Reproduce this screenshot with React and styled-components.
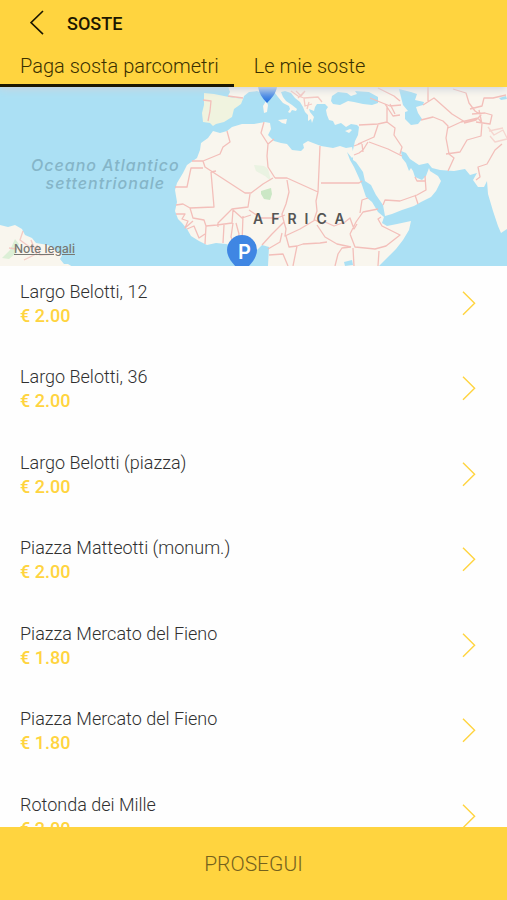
import React, { useState } from "react";
import styled, { createGlobalStyle } from "styled-components";

const tabs = ["Paga sosta parcometri", "Le mie soste"];

const stops = [
  { id: 1, name: "Largo Belotti, 12", price: "€ 2.00" },
  { id: 2, name: "Largo Belotti, 36", price: "€ 2.00" },
  { id: 3, name: "Largo Belotti (piazza)", price: "€ 2.00" },
  { id: 4, name: "Piazza Matteotti (monum.)", price: "€ 2.00" },
  { id: 5, name: "Piazza Mercato del Fieno", price: "€ 1.80" },
  { id: 6, name: "Piazza Mercato del Fieno", price: "€ 1.80" },
  { id: 7, name: "Rotonda dei Mille", price: "€ 2.00" },
];

export default function App() {
  const [tab, setTab] = useState(0);

  return (
    <Page>
      <GlobalStyle />
      <Header>
        <TitleBar>
          <BackButton type="button" aria-label="Indietro">
            <Chevron left />
          </BackButton>
          <h1>SOSTE</h1>
        </TitleBar>
        <Tabs role="tablist">
          {tabs.map((label, i) => (
            <Tab
              key={label}
              type="button"
              role="tab"
              aria-selected={tab === i}
              $active={tab === i}
              onClick={() => setTab(i)}
            >
              {label}
            </Tab>
          ))}
        </Tabs>
      </Header>

      <Map>
        <WorldMap />
        <OceanLabel>
          Oceano Atlantico
          <br />
          settentrionale
        </OceanLabel>
        <ContinentLabel>AFRICA</ContinentLabel>
        <LegalLink href="#note-legali">Note legali</LegalLink>
        <PinLetter>P</PinLetter>
      </Map>

      <List>
        {stops.map((stop) => (
          <li key={stop.id}>
            <Row type="button">
              <span>
                <Name>{stop.name}</Name>
                <Price>{stop.price}</Price>
              </span>
              <Chevron />
            </Row>
          </li>
        ))}
      </List>

      <Proceed type="button">PROSEGUI</Proceed>
    </Page>
  );
}

function Chevron({ left }) {
  return (
    <svg width="14" height="26" viewBox="0 0 14 26" fill="none" aria-hidden="true">
      <path
        d={left ? "M13 1 1 12.6 13 24.2" : "M1 0.8 12.6 12.3 1 23.8"}
        stroke="currentColor"
        strokeWidth={left ? 1.6 : 1.4}
      />
    </svg>
  );
}

function WorldMap() {
  return (
    <svg viewBox="0 87 507 179" preserveAspectRatio="xMidYMid slice" aria-hidden="true">
      <defs>
        <linearGradient id="pin" x1="0" y1="0" x2="0" y2="1">
          <stop offset="0" stopColor="#8db6ec" />
          <stop offset="1" stopColor="#1f6ee0" />
        </linearGradient>
      </defs>
      <rect y="87" width="507" height="179" fill="#abe0f4" />

      <g fill="#f9f6ee">
        {/* Europe and Asia */}
        <path d="M228 86 L230 92 228 96 236 98 243 99 244 96 249 92 257 91 262 93 270 92 275 93 278 97 283 103 289 106 290 109 288 112 290 113 292 110 296 111 297 109 292 105 286 101 283 97 281 92 285 91 291 93 295 98 300 102 303 107 305 112 308 115 308 121 311 119 312 123 314 117 310 112 309 109 314 111 315 107 317 104 325 104 328 107 326 110 327 115 329 120 333 121 335 125 341 123 346 127 351 124 357 125 359 127 358 135 355 141 353 150 353 160 356 162 363 172 365 181 371 185 376 195 383 205 385 216 392 214 402 210 414 206 421 202 431 197 436 191 441 181 438 176 430 171 429 168 426 176 422 180 415 177 413 171 411 168 409 171 406 163 402 158 401 151 406 153 410 159 419 165 428 163 432 168 440 170 454 171 465 169 470 175 477 173 473 180 478 187 484 187 487 181 488 194 493 211 498 226 501 233 507 229 507 86Z" />
        {/* Africa */}
        <path d="M213 131 L220 133 227 131 232 127 242 124 254 124 265 122 270 123 271 129 268 135 274 141 281 143 287 144 292 150 301 151 304 148 303 144 308 141 313 143 321 146 333 148 340 146 346 148 352 147 354 156 352 158 347 152 350 160 354 167 359 178 362 185 366 197 372 202 378 212 384 217 382 223 387 226 397 224 411 221 409 230 403 240 396 249 387 258 379 266 268 266 269 247 262 245 257 250 241 248 226 244 216 243 207 245 199 241 191 236 187 229 182 223 178 219 175 211 177 202 175 190 177 183 183 173 187 165 197 158 200 150 201 143 208 138Z" />
        {/* South America */}
        <path d="M0 225 L8 227 15 225 22 229 25 235 32 238 36 243 48 245 56 250 62 255 60 259 64 264 68 264 73 267 0 267Z" />
        {/* islands */}
        <path d="M266 101l2 4-1 7-3 1-1-7zM278 120l9-1-1 5-4-1zM345 131l5-2 2 1-3 3z" />
      </g>

      {/* Iberia and greener areas */}
      <path d="M204 93 L214 94 229 97 243 99 241 104 234 109 232 117 224 122 216 124 213 126 210 123 203 122 202 113 204 105Z" fill="#f0f3df" />
      <g fill="#dcefd6">
        <path d="M254 165l10 1 4 3 3 12-6-5-9-5z" opacity=".5" />
        <path d="M2 258l8-8 5-11 4 5-4 10-6 5z" />
        <path d="M261 191l10-3 1 6-2 6-6-1-3-5z" fill="#cbe7c5" />
      </g>

      {/* inland seas and lakes */}
      <g fill="#abe0f4">
        <path d="M331 101 L332 96 338 92 347 93 351 96 357 94 355 91 369 92 378 97 378 103 372 105 363 104 354 102 348 101 340 105 333 104Z" />
        <path d="M399 89 L411 92 417 94 415 100 424 102 423 105 416 107 418 113 422 119 418 124 411 125 405 119 405 112 408 111 403 105 401 97Z" />
        <path d="M499 98l7-2 1 3-6 1zM344 262l8-2 1 5-8 1z" />
      </g>

      <g fill="none" stroke="#f3bfba" strokeWidth="1.3" strokeLinejoin="round">
        <path d="M203 100l8 1-1 10-2 10M228 96l15 2" />
        {/* north and west Africa */}
        <path d="M227 131l3 11-7 5-3 7-17 7 2 6 40 26 6 0 12-9 10-6M203 161h-11M203 168h-12l-4 19h-12M211 172l3 35-24 1M211 172l5-1M264 122l-3 11 7 11-1 12 1 11 7 11M268 144l6-5M250 194l-2 13-16 2-14 14 0 4M190 208l-7-4-7 1M190 208l3 10 11 2 2 6-1 18M176 214h9l-3 5 6 2-3 7 8-7M187 229l7-3 5 12 6-4M206 226l11-1 15-2 1-13 9 8 9-3M224 225l-1 18M233 223l-2 14 4 9M236 223l3 11-2 12M243 216l-1 27M249 210l12 8 16 0 8-3" />
        {/* central and east Africa */}
        <path d="M275 178l12 0 31 14 2-46M321 183h38l3-2M318 192l-2 9 1 10-3 9M287 180l2 12-3 12-4 10 2 8-12 12-10 11M284 222l2 7-1 7 15-7 15-9 8 4M286 236l3 11 8-1 6-2 17-1 7-1M317 225l8 12 12 7 14 3M325 222l9 4 11-4 5-4 4 11 3-5M351 247l-9 1-4 6-3 12M350 234l6-12 7-10 15-3M360 213l2-13 6-2M350 234l5 13 20 2 11-3 14-11-18-9-4-7 3-2M378 266l1-15M353 248l1 18M297 246l-4 20M269 255l14-1 5 12M268 249l12-7 2-9" />
        {/* Middle East */}
        <path d="M359 125l19-1 9-2M378 125l-4 12-9 4-7 3M369 142l19 7 14 7M354 155l5-2 4-3 5-8M354 146l8-3M362 144l1 8M387 106l0 16 8 6-1 7 8 12-2 7M383 205l2-5 15 1 17-6 9-5-1-14M415 195l3 9M415 177l2 4 9 0M370 98l20 8 11-1M385 104l8 12 7-1M390 104l5 10M378 88l16 8 6 5" />
        {/* Asia */}
        <path d="M421 120l12-3 10 4 5 5-2 12 3 16 5 4-6 13M446 154l14-2 7-12 14-4 1-13-4-5-17 4-13 6M423 105l11-7 18 16 13 8M428 87v14M464 123l12-3 5-5-6-4-6-8-3-10-13-4M470 109l12-3 2-8 9 0 13-3M472 114l13-1 7 2-2 9-14-2M482 124l-3-14M476 180l4-3-2-10 9-3 8-14 7-6" />
        <path d="M488 127l6 8 9-5 4 8M490 136l5 6 12-3M489 131l14-3" opacity=".6" />
        {/* Balkans and Brazil */}
        <path d="M291 91l7 5 6 2 14-1 4 5M304 98l1 8 7-2M298 98l6-6M296 91l5 5 4-5M307 109l2-7M23 231l-3 9 11 8M31 240l6 15M37 245l3 10 14-1M9 248l8 1M24 260l12-6" opacity=".8" />
      </g>

      {/* pins */}
      <path d="M258 87h19c-1 6-5 11-10 16-5-5-8-10-9-16z" fill="url(#pin)" />
      <path d="M227 250a15 15 0 0 1 30 0c0 7-5 13-11 19h-8c-6-6-11-12-11-19z" fill="#3f86e3" />
    </svg>
  );
}

const GlobalStyle = createGlobalStyle`
  * {
    box-sizing: border-box;
  }

  body {
    margin: 0;
    font-family: Roboto, sans-serif;
    background: #fefefe;
  }

  button {
    border: none;
    padding: 0;
    background: none;
    font: inherit;
    cursor: pointer;
  }
`;

const Page = styled.div`
  height: 100vh;
  display: flex;
  flex-direction: column;
`;

const Header = styled.header`
  position: relative;
  z-index: 1;
  flex-shrink: 0;
  background: #ffd43f;
  box-shadow: 0 2px 8px rgb(205, 210, 220);
`;

const TitleBar = styled.div`
  display: flex;
  align-items: center;
  gap: 23px;
  height: 46px;
  padding-left: 30px;

  h1 {
    margin: 0;
    font-size: 18px;
    font-weight: 500;
    color: #1c1700;
  }
`;

const BackButton = styled.button`
  display: flex;
  color: #1c1700;
`;

const Tabs = styled.div`
  display: flex;
  height: 41px;
`;

const Tab = styled.button`
  padding: 2px 15px 0 20px;
  border-bottom: 3px solid ${(props) => (props.$active ? "#1c1700" : "transparent")};
  font-size: 20px;
  font-weight: 300;
  color: #3a3000;
`;

const Map = styled.section`
  position: relative;
  flex-shrink: 0;
  height: 179px;
  overflow: hidden;

  svg {
    display: block;
    width: 100%;
    height: 100%;
  }
`;

const MapLabel = styled.span`
  position: absolute;
  font-family: Inter, sans-serif;
  white-space: nowrap;
`;

const OceanLabel = styled(MapLabel)`
  top: 69px;
  left: 31px;
  font-size: 16px;
  line-height: 18px;
  font-weight: 500;
  font-style: italic;
  letter-spacing: 1px;
  text-align: center;
  color: #85b5c8;
`;

const ContinentLabel = styled(MapLabel)`
  top: 123px;
  left: 253px;
  font-size: 14px;
  line-height: 18px;
  font-weight: 600;
  letter-spacing: 8px;
  color: #555;
`;

const LegalLink = styled.a`
  position: absolute;
  top: 155px;
  left: 14px;
  font-family: Inter, sans-serif;
  font-size: 12px;
  line-height: 14px;
  font-weight: 500;
  color: #777772;
`;

const PinLetter = styled(MapLabel)`
  top: 153px;
  left: 238px;
  font-size: 20px;
  line-height: 24px;
  font-weight: 600;
  color: #fff;
`;

const List = styled.ul`
  flex: 1;
  min-height: 0;
  margin: 0;
  padding: 0;
  overflow: hidden;
  list-style: none;

  li {
    height: 85px;
  }

  li:nth-child(even) {
    height: 86px;
  }
`;

const Row = styled.button`
  display: flex;
  align-items: center;
  justify-content: space-between;
  width: 100%;
  padding: 13px 31px 0 20px;
  text-align: left;
  color: #ffd43f;
`;

const Name = styled.span`
  display: block;
  font-size: 18px;
  line-height: 25px;
  font-weight: 300;
  color: #303030;
`;

const Price = styled.span`
  display: block;
  font-size: 18px;
  line-height: 24px;
  font-weight: 500;
`;

const Proceed = styled.button`
  && {
    flex-shrink: 0;
    height: 73px;
    background: #ffd43f;
    font-size: 21px;
    font-weight: 300;
    color: #74611d;
  }
`;
